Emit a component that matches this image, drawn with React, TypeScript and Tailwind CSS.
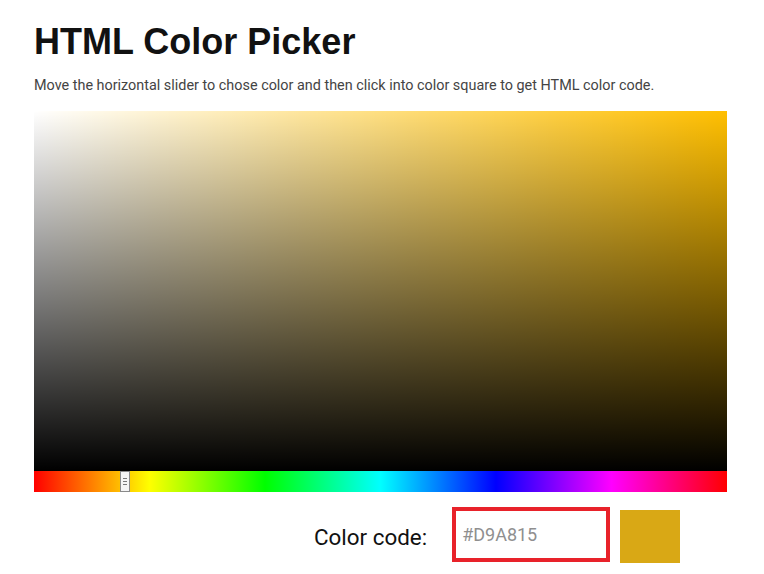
import type { FC } from 'react'

const hue = 45

const HueBar: FC = () => (
  <div className="relative h-[21px] w-full bg-[linear-gradient(to_right,#ff0000_0%,#ffff00_16.67%,#00ff00_33.33%,#00ffff_50%,#0000ff_66.67%,#ff00ff_83.33%,#ff0000_100%)]">
    <div className="absolute left-[86px] top-0 flex h-[21px] w-[10px] flex-col items-center justify-center gap-[2px] border border-[#8a8a8a] bg-[#f4f4f4]">
      <span className="h-px w-[4px] bg-[#777]" />
      <span className="h-px w-[4px] bg-[#777]" />
      <span className="h-px w-[4px] bg-[#777]" />
    </div>
  </div>
)

export default function App() {
  return (
    <div className="min-h-screen bg-white px-[34px] pt-[20px] font-['Roboto',sans-serif]">
      <h1 className="font-['Liberation_Sans',Arial,sans-serif] text-[36px] font-bold leading-[44px] text-[#111]">
        HTML Color Picker
      </h1>
      <p className="mt-[12px] text-[14.4px] leading-[20px] text-[#444]">
        Move the horizontal slider to chose color and then click into color square to get HTML color code.
      </p>

      <div className="mt-[15px] w-[693px]">
        <div
          className="relative h-[360px] w-full"
          style={{ backgroundColor: `hsl(${hue}, 100%, 50%)` }}
        >
          <div className="absolute inset-0 bg-[linear-gradient(to_right,#ffffff,rgba(255,255,255,0))]" />
          <div className="absolute inset-0 bg-[linear-gradient(to_bottom,rgba(0,0,0,0),#000000)]" />
        </div>
        <HueBar />
      </div>

      <div className="mt-[15px] flex items-start">
        <span className="ml-[280px] mt-[16px] text-[22.4px] leading-[28px] text-[#111]">Color code:</span>
        <div className="ml-[25px] flex h-[55px] w-[158px] items-center border-[4px] border-[#e8222a] px-[6px] pb-[1px] text-[18px] text-[#8f8f8f]">
          #D9A815
        </div>
        <div className="ml-[10px] mt-[3px] h-[53px] w-[60px] bg-[#d9a815]" />
      </div>
    </div>
  )
}
